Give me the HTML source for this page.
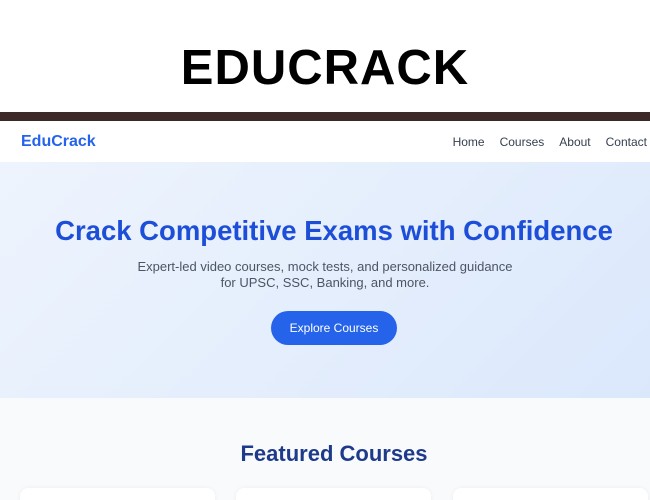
<!DOCTYPE html>
<html><head><style>
*{margin:0;padding:0;box-sizing:border-box}
body{width:650px;height:500px;overflow:hidden;background:#fff;font-family:"Liberation Sans",sans-serif;position:relative}
.t{position:absolute;top:40px;left:0;width:650px;text-align:center;font-weight:bold;font-size:49px;color:#000;letter-spacing:1px}
.bar{position:absolute;top:112px;left:0;width:650px;height:9px;background:#3b2a28}
.nav{position:absolute;top:121px;left:0;width:650px;height:41px;background:#fff;box-shadow:0 1px 3px rgba(0,0,0,.06)}
.logo{position:absolute;left:21px;top:12px;font-weight:bold;font-size:16px;color:#2563eb}
.links{position:absolute;right:3px;top:14px;font-size:12px;color:#374151}
.links span{margin-left:15px}
.hero{position:absolute;top:162px;left:0;width:650px;height:236px;background:linear-gradient(135deg,#eef4fd,#dbe8fc)}
.h1{position:absolute;top:53px;width:650px;text-align:center;font-weight:bold;font-size:27.5px;color:#1d4ed8;padding-left:18px}
.p{position:absolute;top:97px;width:650px;text-align:center;font-size:13px;color:#4b5563;line-height:16px}
.btn{position:absolute;top:149px;left:271px;width:126px;height:34px;border-radius:17px;background:#2563eb;color:#fff;font-size:12px;text-align:center;line-height:34px}
.sec{position:absolute;top:398px;left:0;width:650px;height:102px;background:#f8fafc;overflow:hidden}
.h2{position:absolute;top:43px;width:650px;text-align:center;font-weight:bold;font-size:22px;color:#1e3a8a;padding-left:18px}
.c{position:absolute;top:90px;height:20px;background:#fff;border-radius:8px;box-shadow:0 0 4px rgba(0,0,0,.06)}
</style></head><body>
<div class="t">EDUCRACK</div>
<div class="bar"></div>
<div class="nav"><div class="logo">EduCrack</div><div class="links"><span>Home</span><span>Courses</span><span>About</span><span>Contact</span></div></div>
<div class="hero">
<div class="h1">Crack Competitive Exams with Confidence</div>
<div class="p">Expert-led video courses, mock tests, and personalized guidance<br>for UPSC, SSC, Banking, and more.</div>
<div class="btn">Explore Courses</div>
</div>
<div class="sec">
<div class="h2">Featured Courses</div>
<div class="c" style="left:20px;width:195px"></div>
<div class="c" style="left:236px;width:195px"></div>
<div class="c" style="left:453px;width:195px"></div>
</div>
</body></html>
